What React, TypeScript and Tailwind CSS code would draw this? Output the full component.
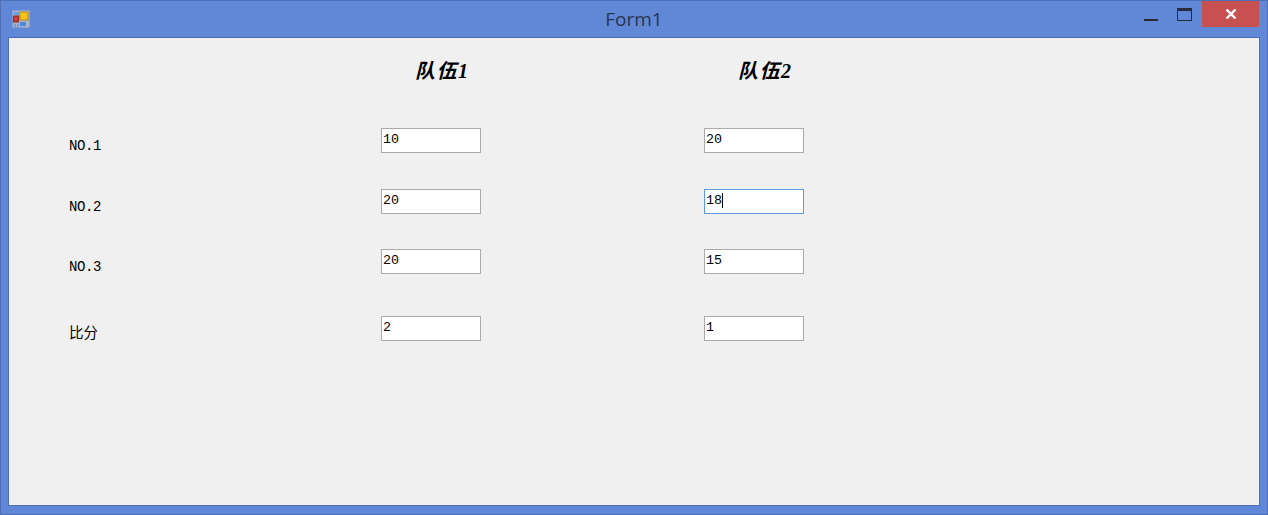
const mono = "font-['Liberation_Mono','Noto_Sans_CJK_SC',monospace]";

function Field({ value, focused }: { value: string; focused?: boolean }) {
  return (
    <div
      className={`w-[100px] h-[25px] bg-white border flex items-center pl-[1px] pb-[2px] text-[13.33px] leading-none text-black ${mono} ${
        focused ? "border-[#5b9bd9]" : "border-[#ababab]"
      }`}
    >
      <span>{value}</span>
      {focused && <span className="w-px h-[15px] bg-black" />}
    </div>
  );
}

function Row({ label, a, b, focused, mt, wide }: { label: string; a: string; b: string; focused?: boolean; mt: string; wide?: boolean }) {
  return (
    <div className={`flex items-start h-[25px] ${mt}`}>
      <div
        className={`w-[312px] pt-[11px] leading-[15px] text-black ${mono} ${
          wide ? "text-[14.5px]" : "text-[14px] tracking-[-0.4px]"
        }`}
      >
        {label}
      </div>
      <div className="w-[323px]">
        <Field value={a} />
      </div>
      <Field value={b} focused={focused} />
    </div>
  );
}

function Heading({ text }: { text: string }) {
  return (
    <div className="w-[323px] pl-[34px] text-[20px] leading-[24px] tracking-[1.5px] font-bold italic text-black font-['Liberation_Serif','Noto_Sans_CJK_SC',serif]">
      {text}
    </div>
  );
}

export default function App() {
  return (
    <div className="w-[1268px] h-[515px] overflow-hidden bg-[#6088d7] border border-[#4d6fb5] flex flex-col">
      <div className="h-[36px] shrink-0 relative flex items-center justify-center">
        <svg className="absolute left-[11px] top-[9px]" width="18" height="18" viewBox="0 0 18 18">
          <rect x="0.5" y="0.5" width="17" height="17" fill="#a9b3c6" />
          <rect x="2" y="2" width="5" height="3" fill="#6f9be0" />
          <rect x="8" y="2" width="8" height="8" fill="#f3c318" stroke="#b98a10" />
          <rect x="1.5" y="6" width="5" height="6" fill="#d33a36" stroke="#8c2a2a" />
          <rect x="8" y="12" width="6" height="4" fill="#4f86e0" />
          <rect x="2" y="14" width="2" height="3" fill="#7d9ac9" />
          <rect x="5" y="14" width="2" height="3" fill="#7d9ac9" />
        </svg>
        <span className="text-[19px] leading-none text-[#28354e] font-['Open_Sans',sans-serif]">Form1</span>
        <div className="absolute left-[1143px] top-[18px] w-[14px] h-[2px] bg-[#2a2a30]" />
        <div className="absolute left-[1176px] top-[7px] w-[15px] h-[13px] border border-[#252c40] border-t-[3px]" />
        <div className="absolute left-[1201px] top-0 w-[57px] h-[26px] bg-[#c75050] flex items-center justify-center">
          <svg width="12" height="10" viewBox="0 0 12 10">
            <path d="M1.5 0.5 L10.5 9.5 M10.5 0.5 L1.5 9.5" stroke="#fff" strokeWidth="2.4" />
          </svg>
        </div>
      </div>
      <div className="mx-[7px] w-[1252px] h-[469px] shrink-0 bg-[#f0f0f0] border border-[#4d6fb5] pl-[60px] pt-[21px]">
        <div className="flex">
          <div className="w-[312px]" />
          <Heading text="队伍1" />
          <Heading text="队伍2" />
        </div>
        <Row label="NO.1" a="10" b="20" mt="mt-[45px]" />
        <Row label="NO.2" a="20" b="18" focused mt="mt-[36px]" />
        <Row label="NO.3" a="20" b="15" mt="mt-[35px]" />
        <Row label="比分" a="2" b="1" mt="mt-[42px]" wide />
      </div>
    </div>
  );
}
